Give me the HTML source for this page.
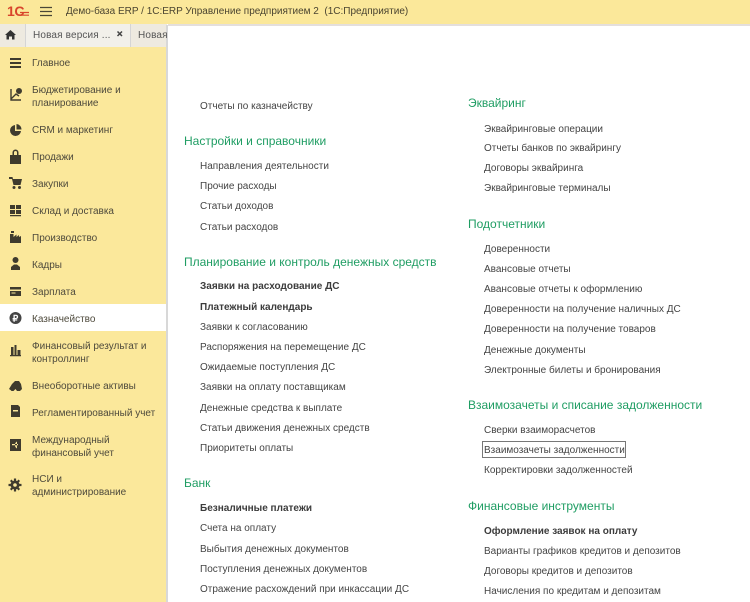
<!DOCTYPE html>
<html lang="ru"><head><meta charset="utf-8"><title>1C ERP</title>
<style>
html,body{margin:0;padding:0;width:750px;height:602px;overflow:hidden;background:#fff}
body{position:relative;font-family:"Liberation Sans",sans-serif;color:#444}
div{position:absolute;white-space:nowrap}
#hd{left:0;top:0;width:750px;height:24px;background:#fbe89a}
#tb{left:0;top:24px;width:167px;height:23px;background:#eeeae0}
#side{left:0;top:47px;width:166px;height:555px;background:#fbe89b}
#ln{left:166px;top:25px;width:2px;height:577px;background:#d8d8d8}
#ln2{left:168px;top:24px;width:582px;height:2px;background:#e4dfdc}
#act{left:0;top:304px;width:166px;height:27px;background:#fff}
.m{left:32px;font-size:10px;line-height:13px;color:#4e4a3c}
.t{left:200px;font-size:10px;line-height:14px;color:#444}
.r{left:484px}
.b{font-weight:bold;color:#3c3c3c}
.g{font-size:12px;line-height:16px;color:#1f9d63}
svg{position:absolute;left:0;top:0}
</style></head><body>
<div id="hd"></div><div id="tb"></div><div id="side"></div><div id="act"></div><div id="ln"></div><div id="ln2"></div>
<div style="left:25px;top:24px;width:1px;height:23px;background:#d5d5d5"></div>
<div style="left:130px;top:24px;width:1px;height:23px;background:#d5d5d5"></div>
<div style="left:26px;top:24px;width:104px;height:23px;background:#f2f0ea"></div>
<div style="left:66px;top:5px;font-size:10px;line-height:13px;color:#4a4430">Демо-база ERP / 1С:ERP Управление предприятием 2&nbsp; (1С:Предприятие)</div>
<div style="left:33px;top:29px;font-size:10px;line-height:13px;letter-spacing:.15px;color:#555">Новая версия ...</div>
<div style="left:138px;top:29px;font-size:10px;line-height:13px;letter-spacing:.15px;color:#555">Новая</div>
<div class="m" style="top:57px">Главное</div>
<div class="m" style="top:84px">Бюджетирование и</div>
<div class="m" style="top:97px">планирование</div>
<div class="m" style="top:124px">CRM и маркетинг</div>
<div class="m" style="top:151px">Продажи</div>
<div class="m" style="top:178px">Закупки</div>
<div class="m" style="top:205px">Склад и доставка</div>
<div class="m" style="top:232px">Производство</div>
<div class="m" style="top:259px">Кадры</div>
<div class="m" style="top:286px">Зарплата</div>
<div class="m" style="top:313px">Казначейство</div>
<div class="m" style="top:340px">Финансовый результат и</div>
<div class="m" style="top:353px">контроллинг</div>
<div class="m" style="top:380px">Внеоборотные активы</div>
<div class="m" style="top:407px">Регламентированный учет</div>
<div class="m" style="top:434px">Международный</div>
<div class="m" style="top:447px">финансовый учет</div>
<div class="m" style="top:473px">НСИ и</div>
<div class="m" style="top:486px">администрирование</div>
<svg width="170" height="602" viewBox="0 0 170 602" fill="#3f3b2e">
<text x="7" y="16" font-family="Liberation Sans" font-weight="bold" font-size="14" letter-spacing="-0.4" fill="#d8452c">1С</text>
<path d="M20 12.500h9M20 15.200h9" stroke="#d8452c" stroke-width="1.200"/>
<path d="M40 7.500h12M40 11.500h12M40 15.500h12" stroke="#4a4636" stroke-width="1.300"/>
<path d="M5 35l5.500-5 5.500 5h-1.500v4.500h-2.500v-3h-3v3H6.500V35z" fill="#333"/>
<path d="M117.500 31.500l4.500 4.500M122 31.500l-4.500 4.500" stroke="#444" stroke-width="1.500"/>
<path d="M10 58h11v2H10zM10 62h11v2H10zM10 66h11v2H10z"/>
<path d="M11 89v11h10M11 99l5-5 3 2" fill="none" stroke="#3f3b2e" stroke-width="1.400"/><circle cx="19" cy="91" r="3"/>
<path d="M15 125a5.500 5.500 0 1 0 6 6h-6z"/><path d="M16.500 124v5.500h5a5.500 5.500 0 0 0-5-5.500z"/>
<path d="M10 155h11v9H10zM12.500 155v-2.500a3 3 0 0 1 6 0v2.500h-1.500v-2.500a1.500 1.500 0 0 0-3 0v2.500z"/>
<path d="M9 177h3.500l.5 2h9l-1.500 6h-7L12 179H9z"/><circle cx="14" cy="187.500" r="1.500"/><circle cx="19.500" cy="187.500" r="1.500"/>
<path d="M10 205h5v4h-5zM16 205h5v4h-5zM10 210h5v4h-5zM16 210h5v4h-5zM10 215h11v1.200H10z"/>
<path d="M10 243v-9h3.500v3l3-2.500v2.500l2.500-2v2l2-1v7z"/><path d="M11 231h3v2h-3z"/>
<circle cx="15.500" cy="260" r="3"/><path d="M11 270v-3l3-2.500h3l3 2.500v3z"/>
<path d="M10 287h11v9H10z"/><path d="M10 289.500h11v1.500H10zM11.500 292.500h4v1h-4z" fill="#fbe89b"/>
<circle cx="15.500" cy="318" r="6" fill="#444"/><text x="12.500" y="321.500" font-family="Liberation Sans" font-weight="bold" font-size="9" fill="#fff">₽</text>
<path d="M11 347h2.500v8H11zM14.500 345h2v10h-2zM17.500 350h3v5h-3zM10 355h11v1.200H10z"/>
<path d="M9 389l3-5 3-3h4l2 3 1 5-2 2h-3l-1.500-2-2 2h-2l-1-1z"/>
<path d="M11 405h7l2 2v10H11z"/><path d="M13 410h5v1.500h-5z" fill="#fbe89b"/>
<path d="M10 439h11v12H10z"/><path d="M12 444h6v1.300h-6zM17 441.500a4 4 0 0 0 0 7z" fill="#fbe89b"/>
<circle cx="15" cy="485" r="4.500"/><path d="M13.900 478.500h2.200v13h-2.200zM8.500 483.900h13v2.200h-13zM10 481l1.500-1.500 8.500 9.500-1.500 1.500zM20 481l-1.500-1.500-8.500 9.500 1.500 1.500z"/><circle cx="15" cy="485" r="1.800" fill="#fbe89b"/>
</svg>
<div class="t" style="top:100px">Отчеты по казначейству</div>
<div class="g" style="left:184px;top:133px">Настройки и справочники</div>
<div class="t" style="top:160px">Направления деятельности</div>
<div class="t" style="top:180px">Прочие расходы</div>
<div class="t" style="top:200px">Статьи доходов</div>
<div class="t" style="top:221px">Статьи расходов</div>
<div class="g" style="left:184px;top:254px">Планирование и контроль денежных средств</div>
<div class="t b" style="top:280px">Заявки на расходование ДС</div>
<div class="t b" style="top:301px">Платежный календарь</div>
<div class="t" style="top:321px">Заявки к согласованию</div>
<div class="t" style="top:341px">Распоряжения на перемещение ДС</div>
<div class="t" style="top:361px">Ожидаемые поступления ДС</div>
<div class="t" style="top:381px">Заявки на оплату поставщикам</div>
<div class="t" style="top:402px">Денежные средства к выплате</div>
<div class="t" style="top:422px">Статьи движения денежных средств</div>
<div class="t" style="top:442px">Приоритеты оплаты</div>
<div class="g" style="left:184px;top:475px">Банк</div>
<div class="t b" style="top:502px">Безналичные платежи</div>
<div class="t" style="top:522px">Счета на оплату</div>
<div class="t" style="top:543px">Выбытия денежных документов</div>
<div class="t" style="top:563px">Поступления денежных документов</div>
<div class="t" style="top:583px">Отражение расхождений при инкассации ДС</div>
<div class="g" style="left:468px;top:95px">Эквайринг</div>
<div class="t r" style="top:123px">Эквайринговые операции</div>
<div class="t r" style="top:142px">Отчеты банков по эквайрингу</div>
<div class="t r" style="top:162px">Договоры эквайринга</div>
<div class="t r" style="top:182px">Эквайринговые терминалы</div>
<div class="g" style="left:468px;top:216px">Подотчетники</div>
<div class="t r" style="top:243px">Доверенности</div>
<div class="t r" style="top:263px">Авансовые отчеты</div>
<div class="t r" style="top:283px">Авансовые отчеты к оформлению</div>
<div class="t r" style="top:303px">Доверенности на получение наличных ДС</div>
<div class="t r" style="top:323px">Доверенности на получение товаров</div>
<div class="t r" style="top:344px">Денежные документы</div>
<div class="t r" style="top:364px">Электронные билеты и бронирования</div>
<div class="g" style="left:468px;top:397px">Взаимозачеты и списание задолженности</div>
<div class="t r" style="top:424px">Сверки взаиморасчетов</div>
<div style="left:482px;top:441px;width:142px;height:15px;border:1px solid #777"></div>
<div class="t r" style="top:444px">Взаимозачеты задолженности</div>
<div class="t r" style="top:464px">Корректировки задолженностей</div>
<div class="g" style="left:468px;top:498px">Финансовые инструменты</div>
<div class="t r b" style="top:525px">Оформление заявок на оплату</div>
<div class="t r" style="top:545px">Варианты графиков кредитов и депозитов</div>
<div class="t r" style="top:565px">Договоры кредитов и депозитов</div>
<div class="t r" style="top:585px">Начисления по кредитам и депозитам</div>
</body></html>
